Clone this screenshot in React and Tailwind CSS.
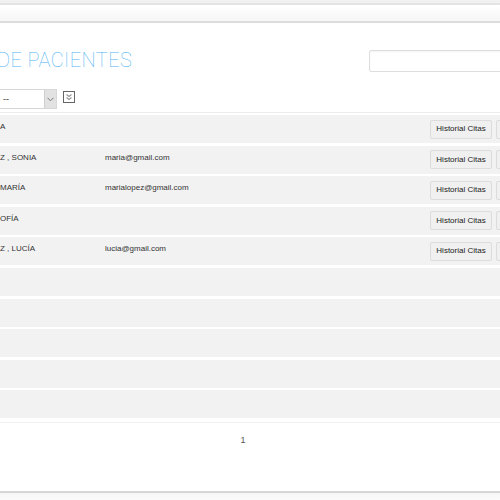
import React from 'react'

const rows = [
  { name: 'A', email: '', btn: true },
  { name: 'Z , SONIA', email: 'maria@gmail.com', btn: true },
  { name: 'MARÍA', email: 'marialopez@gmail.com', btn: true },
  { name: 'OFÍA', email: '', btn: true },
  { name: 'Z , LUCÍA', email: 'lucia@gmail.com', btn: true },
  { name: '', email: '', btn: false },
  { name: '', email: '', btn: false },
  { name: '', email: '', btn: false },
  { name: '', email: '', btn: false },
  { name: '', email: '', btn: false },
]

function DoubleChevron() {
  return (
    <svg width="12" height="12" viewBox="0 0 12 12" className="block">
      <rect x="0.5" y="0.5" width="11" height="11" fill="#fff" stroke="#666" />
      <path d="M3.5 3.5 L6 5.5 L8.5 3.5" fill="none" stroke="#999" strokeWidth="1.2" />
      <path d="M3.5 6.5 L6 8.5 L8.5 6.5" fill="none" stroke="#999" strokeWidth="1.2" />
    </svg>
  )
}

export default function App() {
  return (
    <div className="w-[500px] h-[500px] overflow-hidden bg-white flex flex-col font-['Liberation_Sans',Arial,sans-serif]">
      {/* top nav strip */}
      <div className="h-[3px] bg-[#f1f1f1]" />
      <div className="h-[20px] border-y-2 border-t-[#e4e4e4] border-b-[#dcdcdc] bg-gradient-to-b from-white to-[#f6f6f6]" />

      {/* title + search */}
      <div className="flex items-center justify-between mt-[26px] h-[23px]">
        <h1 className="-ml-[3px] -mt-[2px] text-[20px] leading-none font-thin tracking-[0.4px] text-[#4fb4f3] font-['Roboto','Open_Sans',sans-serif]">
          DE PACIENTES
        </h1>
        <input
          className="w-[150px] h-[22px] mr-[-19px] border border-[#dedede] rounded-[2px] shadow-[inset_0_1px_2px_rgba(0,0,0,0.05)] outline-none"
          type="text"
        />
      </div>

      {/* filter row */}
      <div className="flex items-center gap-[6px] mt-[17px] h-[20px]">
        <div className="flex h-[20px] w-[57px] border border-[#d8d8d8] border-l-0 bg-white">
          <span className="flex-1 text-[9px] leading-[18px] pl-[3px] text-[#333]">--</span>
          <span className="w-[12px] bg-[#e2e2e2] border-l border-[#cfcfcf] flex items-center justify-center">
            <svg width="7" height="5" viewBox="0 0 7 5">
              <path d="M0.5 0.8 L3.5 3.8 L6.5 0.8" fill="none" stroke="#777" strokeWidth="1" />
            </svg>
          </span>
        </div>
        <div className="-mt-[5px]">
          <DoubleChevron />
        </div>
      </div>

      {/* table */}
      <div className="mt-[3px] border-t border-[#ececec] pt-[2px] flex flex-col gap-[2.6px]">
        {rows.map((r, i) => (
          <div key={i} className="h-[28px] bg-[#f2f2f2] flex items-start text-[8px] text-[#333]">
            <span className="w-[105px] pt-[8px] leading-none">{r.name}</span>
            <span className="flex-1 pt-[8px] leading-none">{r.email}</span>
            {r.btn && (
              <div className="flex gap-[4px] self-center mr-[-58px]">
                <button className="h-[19px] w-[62px] bg-[#f0f0f0] border border-[#dcdcdc] rounded-[2px] text-[8px] text-[#222]">
                  Historial Citas
                </button>
                <button className="h-[19px] w-[62px] bg-[#f0f0f0] border border-[#dcdcdc] rounded-[2px] text-[8px] text-[#222]">
                  Editar
                </button>
              </div>
            )}
          </div>
        ))}
      </div>

      {/* pagination */}
      <div className="mt-[4px] border-t border-[#efefef] flex justify-center pt-[11px]">
        <span className="text-[9px] text-[#555] ml-[-14px]">1</span>
      </div>

      <div className="flex-1" />
      <div className="h-[9px] border-t-2 border-[#d6d6d6] bg-gradient-to-b from-[#f6f6f6] to-[#fbfbfb]" />
    </div>
  )
}
